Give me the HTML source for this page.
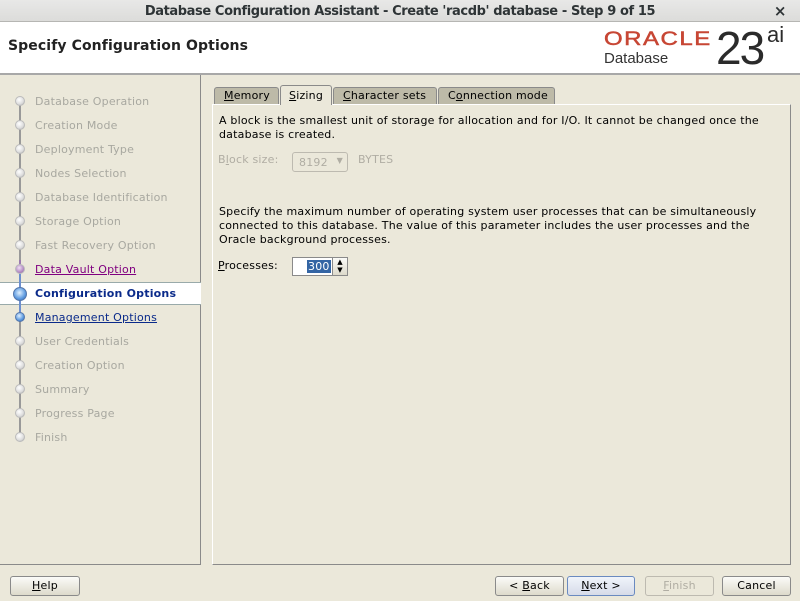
<!DOCTYPE html>
<html><head><style>
*{margin:0;padding:0;box-sizing:border-box}
body{width:800px;height:601px;background:#ebe8da;font-family:"DejaVu Sans",sans-serif;font-size:11px;letter-spacing:0.2px;color:#000;position:relative;overflow:hidden}
.abs{position:absolute}
#title{left:0;top:0;width:800px;height:22px;background:linear-gradient(#e8e8e7,#dcdcda);border-bottom:1px solid #b6b6b3;text-align:center;font-size:13px;font-weight:bold;line-height:23px;color:#2e3436;letter-spacing:-0.4px}
#hdr{left:0;top:22px;width:800px;height:53px;background:#fff;border-bottom:2px solid #a8a8a8}
#hdr h1{position:absolute;left:8px;top:16px;font-size:14px;font-weight:bold;color:#222;letter-spacing:0.1px}
#left{left:0;top:75px;width:201px;height:490px;border-right:1px solid #8a8a8a;border-bottom:1px solid #8a8a8a}
.step{position:absolute;left:35px;color:#a8a8a0;line-height:14px;margin-top:1px}
.dot{position:absolute;left:15px;width:10px;height:10px;border-radius:50%;background:radial-gradient(circle at 40% 35%,#fff,#ddd 60%,#aaa);border:1px solid #bbb}
#line{left:19px;top:101px;width:2px;height:336px;background:#999}
#sel{left:0;top:282px;width:201px;height:23px;background:#fff;border-top:1px solid #9aa;border-bottom:1px solid #9aa}
#panel{left:212px;top:104px;width:579px;height:461px;border-left:1px solid #fff;border-top:1px solid #fff;border-right:1px solid #8a8a8a;border-bottom:1px solid #8a8a8a}
.tab{position:absolute;top:87px;height:17px;background:#bdbaa8;border:1px solid #8a8a8a;border-bottom:none;border-radius:3px 3px 0 0;line-height:16px;padding-left:9px;color:#000}
.btn{position:absolute;top:576px;height:20px;border:1px solid #8a8a8a;border-radius:3px;background:linear-gradient(#fbfbf8,#dddacb);text-align:center;line-height:18px}
u{text-decoration:underline}
</style></head><body>
<div id="title" class="abs">Database Configuration Assistant - Create 'racdb' database - Step 9 of 15<span style="position:absolute;right:14px;top:0;font-size:15px">×</span></div>
<div id="hdr" class="abs"><h1>Specify Configuration Options</h1>
<div class="abs" style="left:604px;top:6px;color:#c74634;font-family:'Liberation Sans',sans-serif;font-size:24px;letter-spacing:1.5px;transform:scaleY(0.8);transform-origin:top left;-webkit-text-stroke:0.6px #c74634">ORACLE</div>
<div class="abs" style="left:604px;top:28px;color:#333;font-family:'Liberation Sans',sans-serif;font-size:15px;letter-spacing:0">Database</div>
<div class="abs" style="left:716px;top:-1px;color:#2b2b2b;font-family:'Liberation Sans',sans-serif;font-size:46px;letter-spacing:-2px">23</div>
<div class="abs" style="left:767px;top:0px;color:#2b2b2b;font-family:'Liberation Sans',sans-serif;font-size:22px;letter-spacing:0">ai</div>
</div>
<div id="left" class="abs"></div>
<div id="sel" class="abs"></div>
<div id="line" class="abs"></div>
<div class="abs" style="left:19px;top:269px;width:2px;height:48px;background:#6d8fcf"></div>
<div class="abs" style="left:19px;top:260px;width:2px;height:10px;background:#9a7ab0"></div>
<div class="dot" style="top:96px"></div><div class="step" style="top:94px">Database Operation</div>
<div class="dot" style="top:120px"></div><div class="step" style="top:118px">Creation Mode</div>
<div class="dot" style="top:144px"></div><div class="step" style="top:142px">Deployment Type</div>
<div class="dot" style="top:168px"></div><div class="step" style="top:166px">Nodes Selection</div>
<div class="dot" style="top:192px"></div><div class="step" style="top:190px">Database Identification</div>
<div class="dot" style="top:216px"></div><div class="step" style="top:214px">Storage Option</div>
<div class="dot" style="top:240px"></div><div class="step" style="top:238px">Fast Recovery Option</div>
<div class="dot" style="top:264px;background:radial-gradient(circle at 40% 35%,#f0e0f4,#b48cc4 60%,#8a5aa0);border-color:#a58}"></div><div class="step" style="top:262px;color:#800080;text-decoration:underline">Data Vault Option</div>
<div class="dot" style="top:287px;left:13px;width:14px;height:14px;background:radial-gradient(circle at 45% 40%,#e0f0ff,#5d9ae0 60%,#2d5fb0);border-color:#5577aa"></div><div class="step" style="top:286px;color:#0a2a8a;font-weight:bold">Configuration Options</div>
<div class="dot" style="top:312px;background:radial-gradient(circle at 40% 35%,#e0f0ff,#5d9ae0 60%,#2d5fb0);border-color:#5577aa"></div><div class="step" style="top:310px;color:#0a2a8a;text-decoration:underline">Management Options</div>
<div class="dot" style="top:336px"></div><div class="step" style="top:334px">User Credentials</div>
<div class="dot" style="top:360px"></div><div class="step" style="top:358px">Creation Option</div>
<div class="dot" style="top:384px"></div><div class="step" style="top:382px">Summary</div>
<div class="dot" style="top:408px"></div><div class="step" style="top:406px">Progress Page</div>
<div class="dot" style="top:432px"></div><div class="step" style="top:430px">Finish</div>

<div id="panel" class="abs"></div>
<div class="tab" style="left:214px;width:65px"><u>M</u>emory</div>
<div class="tab" style="left:280px;width:52px;top:85px;height:20px;background:#ebe8da;line-height:20px;padding-left:8px"><u>S</u>izing</div>
<div class="tab" style="left:333px;width:104px"><u>C</u>haracter sets</div>
<div class="tab" style="left:438px;width:117px">C<u>o</u>nnection mode</div>

<div class="abs" style="left:219px;top:114px;width:565px;line-height:14px">A block is the smallest unit of storage for allocation and for I/O. It cannot be changed once the database is created.</div>
<div class="abs" style="left:218px;top:153px;color:#b0ada3">B<u>l</u>ock size:</div>
<div class="abs" style="left:292px;top:152px;width:56px;height:20px;border:1px solid #bdbab0;border-radius:3px;color:#b0ada3;padding:3px 0 0 6px">8192<span style="position:absolute;right:4px;top:3px;font-size:8px">▼</span></div>
<div class="abs" style="left:358px;top:153px;color:#b0ada3">BYTES</div>
<div class="abs" style="left:219px;top:205px;width:555px;line-height:14px">Specify the maximum number of operating system user processes that can be simultaneously connected to this database. The value of this parameter includes the user processes and the Oracle background processes.</div>
<div class="abs" style="left:218px;top:259px"><u>P</u>rocesses:</div>
<div class="abs" style="left:292px;top:257px;width:56px;height:19px;border:1px solid #8a8a8a;background:#fff"></div>
<div class="abs" style="left:307px;top:260px;background:#3465a4;color:#fff;padding:0 1px;line-height:13px">300</div>
<div class="abs" style="left:332px;top:257px;width:16px;height:19px;border:1px solid #8a8a8a;background:linear-gradient(#fbfbf8,#dddacb);font-size:7px;text-align:center;line-height:8px">▲<br>▼</div>

<div class="btn" style="left:10px;width:70px"><u>H</u>elp</div>
<div class="btn" style="left:495px;width:69px">&lt; <u>B</u>ack</div>
<div class="btn" style="left:567px;width:68px;border-color:#6a8ac0;background:linear-gradient(#f0f4fb,#d6dbe8)"><u>N</u>ext &gt;</div>
<div class="btn" style="left:645px;width:69px;color:#b0ada3;border-color:#bdbab0;background:#ebe8da"><u>F</u>inish</div>
<div class="btn" style="left:722px;width:69px">Cancel</div>
</body></html>
